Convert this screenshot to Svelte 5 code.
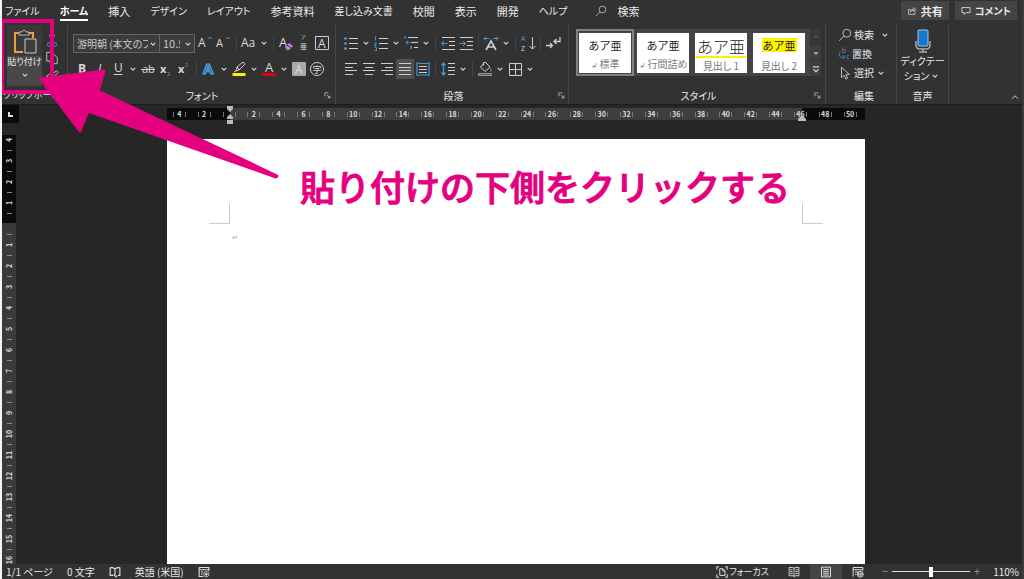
<script lang="ts">
  type Tool = { icon?: string; label?: string; menu?: boolean; sep?: boolean; active?: boolean };

  const tabs = ['ファイル', 'ホーム', '挿入', 'デザイン', 'レイアウト', '参考資料', '差し込み文書', '校閲', '表示', '開発', 'ヘルプ'];

  const fontTop: Tool[] = [
    { icon: 'grow', label: 'フォント サイズの拡大' },
    { icon: 'shrink', label: 'フォント サイズの縮小' },
    { sep: true },
    { icon: 'case', label: '文字種の変換', menu: true },
    { sep: true },
    { icon: 'clear', label: '書式のクリア' },
    { icon: 'ruby', label: 'ルビ' },
    { icon: 'boxed', label: '囲み線' },
  ];
  const fontBottom: Tool[] = [
    { icon: 'bold', label: '太字' },
    { icon: 'italic', label: '斜体' },
    { icon: 'underline', label: '下線', menu: true },
    { icon: 'strike', label: '取り消し線' },
    { icon: 'sub', label: '下付き' },
    { icon: 'sup', label: '上付き' },
    { sep: true },
    { icon: 'effect', label: '文字の効果', menu: true },
    { icon: 'marker', label: '蛍光ペン', menu: true },
    { icon: 'color', label: 'フォントの色', menu: true },
    { icon: 'shade', label: '文字の網かけ' },
    { icon: 'circled', label: '囲い文字' },
  ];
  const paraTop: Tool[] = [
    { icon: 'bullets', label: '箇条書き', menu: true },
    { icon: 'numbers', label: '段落番号', menu: true },
    { icon: 'multi', label: 'アウトライン', menu: true },
    { sep: true },
    { icon: 'outdent', label: 'インデントを減らす' },
    { icon: 'indent', label: 'インデントを増やす' },
    { sep: true },
    { icon: 'layout', label: '拡張書式', menu: true },
    { sep: true },
    { icon: 'sort', label: '並べ替え' },
    { sep: true },
    { icon: 'marks', label: '編集記号' },
  ];
  const paraBottom: Tool[] = [
    { icon: 'left', label: '左揃え' },
    { icon: 'center', label: '中央揃え' },
    { icon: 'right', label: '右揃え' },
    { icon: 'justify', label: '両端揃え', active: true },
    { icon: 'distribute', label: '均等割り付け' },
    { sep: true },
    { icon: 'spacing', label: '行間', menu: true },
    { sep: true },
    { icon: 'bucket', label: '塗りつぶし', menu: true },
    { icon: 'borders', label: '罫線', menu: true },
  ];

  const styles = [
    { name: '標準', mark: true, kind: 'plain' },
    { name: '行間詰め', mark: true, kind: 'plain' },
    { name: '見出し 1', mark: false, kind: 'large' },
    { name: '見出し 2', mark: false, kind: 'lit' },
  ];

  const rulerX = ['4', '2', '', ...Array.from({ length: 25 }, (_, i) => String(i * 2 + 2))];
  const rulerY = ['4', '3', '2', '1', '', ...Array.from({ length: 16 }, (_, i) => String(i + 1))];

  let active = $state('ホーム');
  let picked = $state('標準');
  let zoom = $state(50);

  const hasKana = (text: string) => /[ぁ-ヶ]/.test(text);

  const icons: Record<string, string> = {
    chevron: '<path d="M5 6.500 8 9.500l3-3" stroke-width="1.700"/>',
    grow: '<text x="0" y="12" font-size="12">A</text><path d="m10 4 2-2 2 2" stroke="#3f9bdc"/>',
    shrink: '<text x="0" y="12" font-size="11">A</text><path d="m10 2 2 2 2-2" stroke="#3f9bdc"/>',
    case: '<text x="0" y="12" font-size="12">Aa</text>',
    clear: '<text x="1" y="12" font-size="13">A</text><path d="m7 12 4-4 4 3-4 4H9z" fill="#c18ad8" stroke="#8e4fb0"/><path d="m9 10 4 3" stroke="#333"/>',
    ruby: '<text x="5" y="4" font-size="5">ア</text><text x="4" y="14" font-size="7">亜</text>',
    boxed: '<path d="M1.500 1.500h13v13h-13z"/><text x="4" y="12.500" font-size="12">A</text>',
    bold: '<text x="4" y="12" font-size="12" font-weight="700">B</text>',
    italic: '<text x="6" y="12" font-size="12" font-style="italic" font-family="Liberation Serif">I</text>',
    underline: '<text x="4" y="11" font-size="12">U</text><path d="M3.500 13.500h9"/>',
    strike: '<text x="2" y="12" font-size="11">ab</text><path d="M1 8.500h14"/>',
    sub: '<text x="2" y="12" font-size="11" font-weight="700">x</text><text x="9" y="15" font-size="6" style="fill:#3f9bdc">2</text>',
    sup: '<text x="2" y="12" font-size="11" font-weight="700">x</text><text x="9" y="6" font-size="6" style="fill:#3f9bdc">2</text>',
    effect: '<text x="2" y="13" font-size="15" font-weight="700" style="fill:#1c5c91;stroke:#56aee8;stroke-width:1">A</text>',
    marker: '<path d="M1.500 12h13v3h-13z" fill="#fff200" stroke="none"/><path d="m5 10 1-4 6-5 2 2-6 6zM6 6l2 3M3 11l2-1"/>',
    color: '<path d="M1.500 12h13v3h-13z" fill="#e60012" stroke="none"/><text x="4" y="11" font-size="13">A</text>',
    shade: '<path d="M1.500 1.500h13v13h-13z" fill="#aaa" stroke="#aaa"/><text x="4" y="12.500" font-size="12" style="fill:#dedede">A</text>',
    circled: '<circle cx="8" cy="8" r="6.500"/><text x="3.500" y="11.500" font-size="9">字</text>',
    bullets: '<path d="M6 3.500h9M6 8.500h9M6 13.500h9"/><path d="M1 3.500h3M1 8.500h3M1 13.500h3" stroke="#3f9bdc" stroke-width="2"/>',
    numbers: '<path d="M6 3.500h9M6 8.500h9M6 13.500h9"/><path d="M2.500 1.500v4M1.500 8h2l-2 2.500h2M1.500 12.500h2v3h-2" stroke="#3f9bdc"/>',
    multi: '<path d="M5 2.500h10M8 7.500h7M11 12.500h4"/><path d="M1 2.500h2M4 6v3M5.500 7.500h1M8 11v3" stroke="#3f9bdc" stroke-width="1.500"/>',
    outdent: '<path d="M2 2.500h13M9 6.500h6M9 10.500h6M2 14.500h13"/><path d="M7.500 8.500H2M4 6 1.500 8.500 4 11" stroke="#3f9bdc"/>',
    indent: '<path d="M2 2.500h13M9 6.500h6M9 10.500h6M2 14.500h13"/><path d="M1.500 8.500H7M5 6l2.500 2.500L5 11" stroke="#3f9bdc"/>',
    layout: '<path d="M3 15 8 6l5 9M5 12h6" stroke-width="1.600"/><path d="M1 3.500h5M3 1.500l-2 2 2 2M15 3.500h-5M13 1.500l2 2-2 2" stroke="#3f9bdc"/>',
    sort: '<text x="1" y="6" font-size="7" style="fill:#3f9bdc">A</text><text x="1" y="16" font-size="7">Z</text><path d="M12.500 2v12M9.500 11l3 3 3-3"/>',
    marks: '<path d="M1 10.500h6M5 8l2.500 2.500L5 13M15 2v4.500H9M11.500 4 9 6.500 11.500 9" stroke-width="1.300"/>',
    left: '<path d="M2 2.500h12M2 6.500h8M2 9.500h12M2 13.500h8"/>',
    center: '<path d="M2 2.500h12M4 6.500h8M2 9.500h12M4 13.500h8"/>',
    right: '<path d="M2 2.500h12M6 6.500h8M2 9.500h12M6 13.500h8"/>',
    justify: '<path d="M2 2.500h12M2 6.500h12M2 9.500h12M2 13.500h12"/>',
    distribute: '<path d="M4 5.500h8M4 8.500h8M4 11.500h8"/><path d="M2 1v14M14 1v14M3 2.500h10M3 14h10" stroke="#3f9bdc" stroke-width="1.200"/>',
    spacing: '<path d="M8 2.500h7M8 6.500h7M8 9.500h7M8 13.500h7"/><path d="M3.500 2v12M1.500 4.500 3.500 2l2 2.500M1.500 11.500l2 2.500 2-2.500" stroke="#3f9bdc" stroke-width="1.300"/>',
    bucket: '<path d="m8 1 5 5-5 4.500-4.500-4.500zM6.500 4.500V1.500"/><path d="M12.500 6.500q3 3 1 4.500" stroke="#3f9bdc"/><path d="M1.500 12.500h13v2h-13z" stroke="#999" fill="#555"/>',
    borders: '<path d="M2.500 2.500h12v12h-12zM8.500 2.500v12M2.500 8.500h12"/>',
    search: '<circle cx="10" cy="6" r="4.500"/><path d="m6.500 9.500-5 5"/>',
    replace: '<text x="5" y="7" font-size="9" style="fill:#b36bd4">b</text><text x="11" y="15" font-size="9" style="fill:#3f9bdc">c</text><path d="M3.500 5Q0 8 2 11t6 1M6.500 9.500 9 12l-2.500 2.500" stroke="#3f9bdc"/>',
    select: '<path d="M4 1.500v12l3-3 2 4.500 2-1-2-4.500h4z"/>',
    cut: '<path d="m5 1 5 9M11 1 6 10"/><circle cx="4.500" cy="12" r="2" stroke="#3f9bdc"/><circle cx="11.500" cy="12" r="2" stroke="#3f9bdc"/>',
    copy: '<path d="M2 1.500h6v10H2zM8 4.500h3l3 3v7H6v-3"/>',
    painter: '<path d="m2 9 5 5 3-3-5-4zM8 8l5-5 2 2-5 5"/><path d="m1 10 4 5" stroke="#e8a33d"/>',
    share: '<path d="M6 5.500H2.500v8h10V10M5 10q1-5 6-5V2.500L14.500 6 11 9V7Q7 7 5 10z" stroke-width="1.300"/>',
    comment: '<path d="M1.500 2.500h13v8H8L5 13.500v-3H1.500z" stroke-width="1.500"/>',
    launch: '<path d="M2 10V2h8M7 7l6 6M13.500 8v5.500H8" stroke-width="1.700"/>',
    up: '<path d="m5 9.500 3-3 3 3"/>',
    more: '<path d="M3 4.500h10M4 8.500l4 4 4-4" stroke-width="2"/>',
    collapse: '<path d="m3 11 5-5 5 5" stroke-width="1.500"/>',
    proof: '<path d="M8 4v9M8 4Q5 1.500 1.500 2.500v10h4M8 4q3-2.500 6.500-1.500v10H12M8 13l-2-1.500M8 15l3-2" stroke-width="1.500"/>',
    macro: '<path d="M1.500 2h13v5M1.500 2v12H7M1.500 5h13M4 8h3M4 11h2" stroke-width="1.500"/><circle cx="11" cy="11" r="3.500"/><circle cx="11" cy="11" r="1.300" fill="#eee"/>',
    focus: '<path d="M1 5V1h3M15 5V1h-3M1 11v4h3M15 11v4h-3M5 3.500h4l3 3v6H5zM9 3.500v3h3" stroke-width="1.300"/>',
    read: '<path d="M8 3v11M1.500 2h5L8 3l1.500-1h5v11h-5L8 14l-1.500-1h-5zM3 5h3M3 7.500h3M3 10h3M10 5h3M10 7.500h3M10 10h3" stroke-width="1.200"/>',
    print: '<path d="M2 1.500h12v13H2zM4 4.500h8M4 7h8M4 9.500h8M4 12h8" stroke-width="1.300"/>',
    web: '<path d="M1.500 14V2h13v4M1.500 5h13M4 8h4M4 11h2" stroke-width="1.300"/><circle cx="11" cy="11" r="4"/><path d="M7 11h8M11 7v8M9 8q-1 3 0 6M13 8q1 3 0 6"/>',
  };
</script>

{#snippet icon(name: string)}
  <svg class="icon" viewBox="0 0 16 16" aria-hidden="true">{@html icons[name]}</svg>
{/snippet}

{#snippet row(tools: Tool[])}
  {#each tools as tool}
    {#if tool.sep}
      <span class="sep"></span>
    {:else}
      <button class="tool" class:on={tool.active} aria-label={tool.label}>{@render icon(tool.icon ?? '')}</button>
      {#if tool.menu}
        <button class="chev" aria-label="{tool.label}のメニュー">{@render icon('chevron')}</button>
      {/if}
    {/if}
  {/each}
{/snippet}

{#snippet caption(text: string, launcher: boolean)}
  <div class="caption">
    <span></span>
    <span>{text}</span>
    {#if launcher}
      <button class="launcher" aria-label="{text}の設定">{@render icon('launch')}</button>
    {/if}
  </div>
{/snippet}

<div class="app">
  <header class="top">
    <nav class="tabs">
      {#each tabs as tab}
        <button class="tab" class:kana={hasKana(tab)} class:current={active === tab} onclick={() => (active = tab)}>
          {tab}
        </button>
      {/each}
      <button class="tab find">{@render icon('search')}検索</button>
    </nav>
    <div class="actions">
      <button>{@render icon('share')}共有</button>
      <button class="kana">{@render icon('comment')}コメント</button>
    </div>
  </header>

  <div class="ribbon">
    <section class="group clipboard">
      <div class="body">
        <button class="paste">
          <svg class="board" viewBox="0 0 24 26" aria-hidden="true">
            <path d="M6 4H2v19h8M16 4h4v5" fill="none" stroke="#e8a33d" stroke-width="2" />
            <path d="M6 6V3h3q2-4 4 0h3v3z" fill="#333" stroke="#bbb" />
            <path d="M12 10h11v14H12z" fill="#3c3c3c" stroke="#ccc" />
          </svg>
          <span>貼り付け</span>
          {@render icon('chevron')}
        </button>
        <div class="minis">
          <button aria-label="切り取り">{@render icon('cut')}</button>
          <button aria-label="コピー">{@render icon('copy')}</button>
          <button aria-label="書式のコピー">{@render icon('painter')}</button>
        </div>
      </div>
      {@render caption('クリップボード', false)}
    </section>

    <section class="group font">
      <div class="body rows">
        <div class="row">
          <span class="pick">
            <select class="family" aria-label="フォント"><option>游明朝 (本文のフォント)</option></select>
            {@render icon('chevron')}
          </span>
          <span class="pick">
            <select class="size" aria-label="フォント サイズ"><option>10.5</option></select>
            {@render icon('chevron')}
          </span>
          {@render row(fontTop)}
        </div>
        <div class="row">{@render row(fontBottom)}</div>
      </div>
      {@render caption('フォント', true)}
    </section>

    <section class="group para">
      <div class="body rows">
        <div class="row">{@render row(paraTop)}</div>
        <div class="row">{@render row(paraBottom)}</div>
      </div>
      {@render caption('段落', true)}
    </section>

    <section class="group styles">
      <div class="body">
        <div class="gallery">
          {#each styles as style}
            <button class="card" class:picked={picked === style.name} onclick={() => (picked = style.name)}>
              <span class="sheet">
                <span class="sample {style.kind}">あア亜</span>
                <span class="name">{#if style.mark}<i>↲</i>{/if}{style.name}</span>
              </span>
            </button>
          {/each}
          <div class="scroll">
            <button aria-label="前の行" disabled>{@render icon('up')}</button>
            <button aria-label="次の行">{@render icon('chevron')}</button>
            <button aria-label="その他">{@render icon('more')}</button>
          </div>
        </div>
      </div>
      {@render caption('スタイル', true)}
    </section>

    <section class="group edit">
      <div class="body">
        <button>{@render icon('search')}検索<span class="wide">{@render icon('chevron')}</span></button>
        <button>{@render icon('replace')}置換</button>
        <button>{@render icon('select')}選択{@render icon('chevron')}</button>
      </div>
      {@render caption('編集', false)}
    </section>

    <section class="group voice">
      <div class="body">
        <button>
          <svg class="mic" viewBox="0 0 16 24" aria-hidden="true">
            <path d="M1 12v4q0 4 4 4h6q4 0 4-4v-4M8 20v3M4 23h8" fill="none" stroke="#aaa" stroke-width="1.500" />
            <rect x="3" y="1" width="10" height="16" rx="1" fill="#1479cc" stroke="#9cc9ee" />
          </svg>
          <span>ディクテー</span>
          <span class="line">ション{@render icon('chevron')}</span>
        </button>
      </div>
      {@render caption('音声', false)}
    </section>
    <button class="collapse" aria-label="リボンを折りたたむ">{@render icon('collapse')}</button>
  </div>

  <main class="work">
    <div class="side">
      <button class="tabstop" aria-label="タブの種類"><span></span></button>
      <div class="vruler">
        {#each rulerY as n}
          <div class="vcell"><span>{n}</span></div>
        {/each}
      </div>
    </div>
    <div class="canvas">
      <div class="hruler">
        {#each rulerX as n}
          <div class="hcell"><span>{n}</span></div>
        {/each}
        <div class="hrest"></div>
        <svg class="stop first" viewBox="0 0 8 18" aria-hidden="true">
          <path d="M1 0h6v3L4 6 1 3zM4 8l3 3v2H1v-2zM1 14h6v4H1z" />
        </svg>
        <svg class="stop last" viewBox="0 0 8 18" aria-hidden="true"><path d="m4 9 4 4v2H0v-2z" /></svg>
      </div>
      <article class="page">
        <div class="margins"><i></i><i></i></div>
        <p>↵</p>
      </article>
    </div>
  </main>

  <footer class="status">
    <button>1/1 ページ</button>
    <button>0 文字</button>
    <button aria-label="文章校正">{@render icon('proof')}</button>
    <button>英語 (米国)</button>
    <button aria-label="マクロの記録">{@render icon('macro')}</button>
    <div class="views">
      <button class="focus">{@render icon('focus')}フォーカス</button>
      <button class="view" aria-label="閲覧モード">{@render icon('read')}</button>
      <button class="view on" aria-label="印刷レイアウト">{@render icon('print')}</button>
      <button class="view" aria-label="Web レイアウト">{@render icon('web')}</button>
    </div>
    <div class="zoom">
      <button class="step" aria-label="縮小">−</button>
      <input type="range" min="0" max="100" bind:value={zoom} aria-label="ズーム" />
      <button class="step" aria-label="拡大">+</button>
      <button class="percent">110%</button>
    </div>
  </footer>

  <svg class="pointer" width="290" height="190" viewBox="0 0 290 190" aria-hidden="true">
    <path d="M2 21h50v71H2z" fill="none" stroke="#e4007f" stroke-width="4" />
    <path d="m41 79 63-8-6 20 179 85-1 1-188-66-8 20z" fill="#e4007f" stroke="#e4007f" stroke-width="3" stroke-linejoin="round" />
  </svg>
  <p class="note">貼り付けの下側をクリックする</p>
</div>

<style>
  :global(body) {
    margin: 0;
    background: #262626;
  }
  .app {
    position: relative;
    display: flex;
    flex-direction: column;
    box-sizing: border-box;
    height: 100vh;
    overflow: hidden;
    border-left: 2px solid #f4f4f4;
    border-right: 2px solid #3c3c3c;
    background: #262626;
    color: #e8e8e8;
    font-family: "Noto Sans CJK JP", sans-serif;
    font-size: 10px;
    font-feature-settings: "palt";
  }
  button {
    margin: 0;
    padding: 0;
    border: 0;
    background: none;
    color: inherit;
    font: inherit;
    white-space: nowrap;
  }
  .icon {
    flex: none;
    width: 16px;
    height: 16px;
    fill: none;
    stroke: #cfcfcf;
    overflow: visible;
  }
  .icon :global(text) {
    fill: #d8d8d8;
    stroke: none;
    font-family: "Open Sans", "Noto Sans CJK JP", sans-serif;
  }

  .top {
    display: flex;
    justify-content: space-between;
    height: 22px;
    background: #323232;
  }
  .tabs {
    display: flex;
    gap: 20px;
    padding-left: 3px;
  }
  .tab {
    display: flex;
    align-items: center;
    height: 21px;
    box-sizing: border-box;
    padding-top: 2px;
    border-bottom: 2px solid transparent;
    font-size: 11px;
  }
  .tab.kana {
    font-size: 10px;
  }
  .tab.current {
    border-color: #fff;
    color: #fff;
    font-weight: 700;
  }
  .find {
    gap: 10px;
    margin-left: 8px;
  }
  .find .icon {
    width: 12px;
    height: 12px;
  }
  .actions {
    display: flex;
    gap: 6px;
    padding: 1px 5px 0 0;
  }
  .actions button {
    display: flex;
    align-items: center;
    gap: 4px;
    height: 19px;
    padding: 0 6px;
    background: #444;
    font-size: 11px;
    font-weight: 700;
  }
  .actions .kana {
    font-size: 10px;
  }
  .actions .icon {
    width: 10px;
    height: 10px;
  }

  .ribbon {
    display: flex;
    padding-top: 3px;
    border-bottom: 1px solid #1c1c1c;
    background: #323232;
  }
  .group {
    display: flex;
    flex-direction: column;
    box-sizing: border-box;
    border-right: 1px solid #484848;
  }
  .body {
    height: 61px;
  }
  .caption {
    display: grid;
    grid-template-columns: 1fr auto 1fr;
    align-items: center;
    height: 18px;
  }
  .launcher {
    display: flex;
    justify-self: end;
  }
  .launcher .icon {
    width: 7px;
    height: 7px;
  }
  .rows {
    display: flex;
    flex-direction: column;
    gap: 6px;
    box-sizing: border-box;
    padding-top: 8px;
  }
  .row {
    display: flex;
    align-items: center;
    height: 20px;
  }
  .tool {
    display: flex;
    align-items: center;
    justify-content: center;
    width: 18px;
    height: 20px;
  }
  .tool.on {
    background: #505050;
  }
  .chev {
    display: flex;
    align-items: center;
    justify-content: center;
    width: 12px;
  }
  .chev .icon,
  .pick .icon,
  .edit .icon:last-child,
  .line .icon {
    width: 12px;
    height: 12px;
  }
  .sep {
    width: 1px;
    height: 16px;
    margin: 0 3px;
    background: #424242;
  }

  .clipboard {
    width: 66px;
  }
  .clipboard .caption {
    display: block;
    padding-left: 1px;
    font-size: 9px;
    line-height: 18px;
  }
  .clipboard .body {
    display: flex;
    gap: 3px;
    padding-left: 5px;
  }
  .paste {
    display: flex;
    flex-direction: column;
    align-items: center;
    width: 35px;
    padding-top: 4px;
    background: linear-gradient(#3a3a3a 31px, #484848 31px);
    line-height: 14px;
  }
  .paste span {
    font-size: 9px;
  }
  .board {
    width: 24px;
    height: 26px;
  }
  .paste .icon {
    width: 12px;
    height: 12px;
  }
  .minis {
    display: flex;
    flex-direction: column;
    gap: 3px;
    padding-top: 9px;
  }
  .minis button {
    display: flex;
  }
  .minis .icon {
    width: 14px;
    height: 14px;
  }

  .font {
    padding: 0 4px 0 5px;
  }
  .pick {
    position: relative;
    display: flex;
  }
  .pick:nth-child(2) {
    margin-right: 2px;
  }
  .pick .icon {
    position: absolute;
    top: 4px;
    right: 1px;
    pointer-events: none;
  }
  select {
    appearance: none;
    box-sizing: border-box;
    height: 19px;
    padding: 0 11px 0 3px;
    border: 1px solid #666;
    border-radius: 0;
    background: #3c3c3c;
    color: #c8c8c8;
    font: inherit;
  }
  .family {
    width: 87px;
  }
  .size {
    width: 35px;
    padding-right: 14px;
    border-left: 0;
    font-size: 11px;
  }

  .para {
    padding: 0 3px 0 6px;
    width: 233px;
  }

  .styles {
    padding: 0 4px 0 7px;
  }
  .gallery {
    display: flex;
    margin-top: 4px;
    background: #444;
  }
  .card {
    box-sizing: border-box;
    width: 58px;
    height: 47px;
    padding: 1px;
    border: 2px solid transparent;
  }
  .card.picked {
    border-color: #828282;
  }
  .sheet {
    display: flex;
    flex-direction: column;
    align-items: center;
    justify-content: space-between;
    height: 40px;
    overflow: hidden;
    background: #fff;
    color: #222;
  }
  .sample {
    margin-top: 5px;
    padding: 0 1px;
    font-size: 11px;
    line-height: 14px;
    font-feature-settings: normal;
  }
  .sample.large {
    margin-top: 3px;
    border-bottom: 2px solid #ffee00;
    font-size: 16px;
    font-weight: 300;
    line-height: 20px;
  }
  .sample.lit {
    background: #fff200;
  }
  .name {
    color: #777;
    font-size: 10px;
    line-height: 15px;
  }
  .name i {
    margin-right: 3px;
    font-size: 7px;
  }
  .scroll {
    display: flex;
    flex-direction: column;
    gap: 1px;
    margin-left: 2px;
    background: #323232;
  }
  .scroll button {
    display: flex;
    flex: 1;
    align-items: center;
    justify-content: center;
    width: 11px;
    background: #3e3e3e;
  }
  .scroll button:disabled {
    opacity: 0.5;
  }
  .scroll .icon {
    width: 10px;
    height: 10px;
  }

  .edit {
    width: 71px;
    padding-left: 12px;
  }
  .edit .caption {
    margin-left: -6px;
  }
  .edit .body {
    display: flex;
    flex-direction: column;
    align-items: flex-start;
  }
  .edit button {
    display: flex;
    align-items: center;
    gap: 1px;
    height: 19px;
    font-size: 10px;
  }
  .edit .icon {
    width: 14px;
    height: 14px;
  }
  .edit button > .icon:first-child {
    margin-right: 1px;
  }
  .wide {
    display: flex;
    margin-left: 4px;
  }

  .voice {
    width: 52px;
  }
  .voice button {
    display: flex;
    flex-direction: column;
    align-items: center;
    width: 100%;
    padding-top: 4px;
    line-height: 15px;
  }
  .mic {
    width: 16px;
    height: 24px;
  }
  .line {
    display: flex;
    align-items: center;
  }
  .collapse {
    align-self: flex-end;
    display: flex;
    margin: 0 2px 2px auto;
  }
  .collapse .icon {
    width: 10px;
    height: 10px;
  }

  .work {
    display: flex;
    flex: 1;
    min-height: 0;
  }
  .side {
    display: flex;
    flex-direction: column;
    width: 17px;
  }
  .tabstop {
    flex: none;
    display: flex;
    align-items: center;
    justify-content: center;
    width: 17px;
    height: 18px;
    margin-bottom: 12px;
    background: #0a0a0a;
  }
  .tabstop span {
    width: 3px;
    height: 3px;
    border: solid #ddd;
    border-width: 0 0 2px 2px;
  }
  .vruler {
    flex: 1;
    width: 14px;
    overflow: hidden;
    background: linear-gradient(#0a0a0a 88px, #3a3a3a 88px);
    color: #ddd;
    font-size: 7px;
    font-weight: 700;
  }
  .vcell {
    display: flex;
    flex-direction: column;
    align-items: center;
    height: 21px;
  }
  .vcell span {
    width: 10px;
    height: 10px;
    line-height: 10px;
    text-align: center;
    transform: rotate(-90deg);
  }
  .vcell::after {
    content: "";
    width: 5px;
    height: 1px;
    margin-top: 5px;
    background: #888;
  }
  .canvas {
    display: flex;
    flex: 1;
    flex-direction: column;
    padding: 3px 15.400% 0 14.500%;
  }
  .hruler {
    position: relative;
    display: flex;
    align-items: center;
    height: 12px;
    margin-bottom: 19px;
    background: linear-gradient(90deg, #0a0a0a 9%, #3e3e3e 9%, #3e3e3e 91%, #0a0a0a 91%);
    color: #ddd;
    font-size: 7px;
    font-weight: 700;
  }
  .hcell {
    display: flex;
    flex: 10;
    align-items: center;
    justify-content: center;
    min-width: 0;
    line-height: 12px;
  }
  .hcell::before,
  .hcell::after {
    content: "";
    width: 1px;
    height: 5px;
    background: #777;
  }
  .hcell span {
    width: 11px;
    text-align: center;
  }
  .hrest {
    flex: 1;
  }
  .stop {
    position: absolute;
    top: -2px;
    width: 8px;
    height: 18px;
    margin-left: -4px;
    fill: #bbb;
  }
  .first {
    left: 9%;
  }
  .last {
    left: 91%;
  }
  .page {
    flex: 1;
    padding: 64px 6% 0;
    background: #fff;
    color: #999;
  }
  .margins {
    display: flex;
    justify-content: space-between;
  }
  .margins i {
    width: 20px;
    height: 20px;
    border: solid #ccc;
    border-width: 0 1px 1px 0;
  }
  .margins i:last-child {
    border-width: 0 0 1px 1px;
  }
  .page p {
    margin: 8px 0 0 23px;
    font-size: 7px;
    line-height: 10px;
  }

  .status {
    display: flex;
    align-items: center;
    gap: 14px;
    height: 15px;
    padding-left: 4px;
    background: #323232;
    line-height: 15px;
  }
  .status button {
    display: flex;
    align-items: center;
  }
  .status .icon {
    width: 12px;
    height: 12px;
    stroke: #e0e0e0;
  }
  .views {
    display: flex;
    align-items: center;
    margin-left: auto;
  }
  .status .focus {
    gap: 1px;
    margin-right: 9px;
    font-size: 9px;
  }
  .view {
    justify-content: center;
    width: 32px;
    height: 15px;
  }
  .view.on {
    background: #444;
  }
  .zoom {
    display: flex;
    align-items: center;
    gap: 4px;
    margin-left: -6px;
    padding-right: 3px;
  }
  .step {
    color: #999;
    font-size: 11px;
  }
  .percent {
    margin-left: 9px;
  }
  input {
    appearance: none;
    width: 78px;
    height: 11px;
    margin: 0;
    background: linear-gradient(#ddd, #ddd) center / 100% 1px no-repeat;
  }
  input::-webkit-slider-thumb {
    appearance: none;
    width: 4px;
    height: 10px;
    background: #fff;
  }

  .pointer {
    position: absolute;
    top: 0;
    left: -2px;
    pointer-events: none;
  }
  .note {
    position: absolute;
    top: 161px;
    left: 298px;
    margin: 0;
    color: #e4007f;
    font-size: 35px;
    font-weight: 500;
    line-height: 50px;
    font-feature-settings: normal;
    white-space: nowrap;
    -webkit-text-stroke: 1px #e4007f;
  }
</style>
